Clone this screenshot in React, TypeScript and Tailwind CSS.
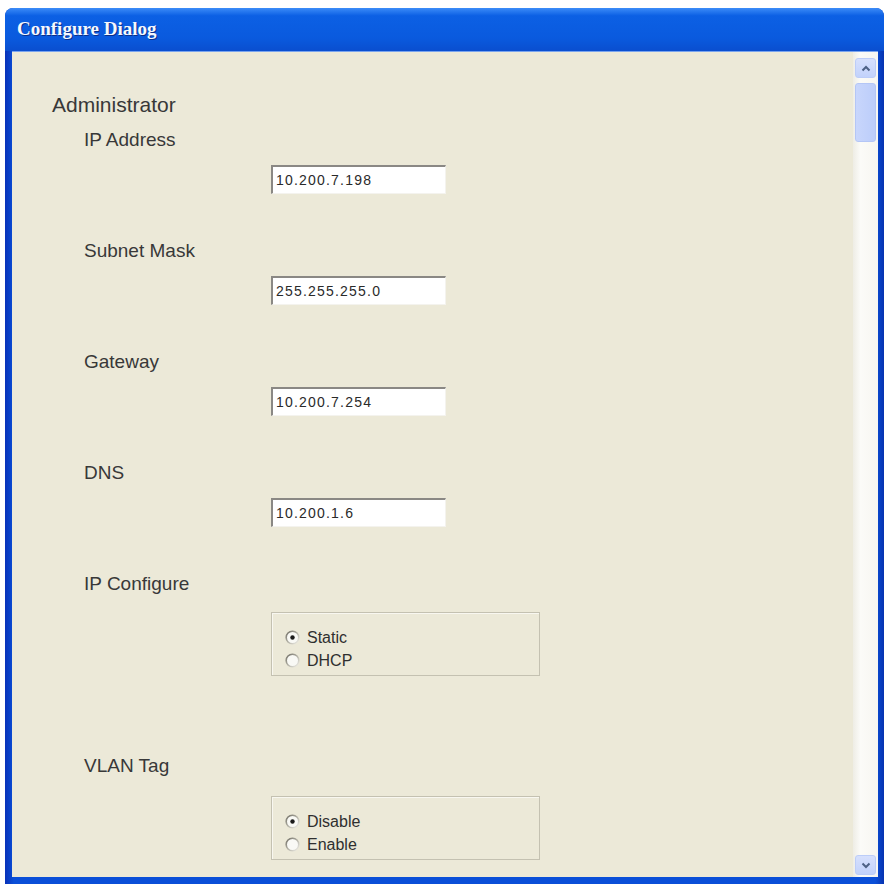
import React from "react";

const fields = [
  { label: "IP Address", value: "10.200.7.198" },
  { label: "Subnet Mask", value: "255.255.255.0" },
  { label: "Gateway", value: "10.200.7.254" },
  { label: "DNS", value: "10.200.1.6" },
];

const Radio = ({ checked, label }: { checked?: boolean; label: string }) => (
  <div className="flex items-center h-[23px]">
    <svg width="15" height="15" viewBox="0 0 15 15" className="shrink-0">
      <defs>
        <linearGradient id="rg" x1="0" y1="0" x2="1" y2="1">
          <stop offset="0" stopColor="#6f6d64" />
          <stop offset="0.55" stopColor="#b9b7ac" />
          <stop offset="1" stopColor="#f2f1ea" />
        </linearGradient>
      </defs>
      <circle cx="7.5" cy="7.5" r="6.3" fill="#f9f9f5" stroke="url(#rg)" strokeWidth="1.6" />
      {checked && <circle cx="7.5" cy="7.5" r="2.2" fill="#1a1a1a" />}
    </svg>
    <span className="ml-[7px] text-[16px] leading-[23px] text-[#2f2f2f]">{label}</span>
  </div>
);

const GroupBox = ({ options }: { options: string[] }) => (
  <div className="ml-[219px] w-[269px] h-[64px] border border-[#c4c1b1] shadow-[inset_1px_1px_0_#f8f7f0] pt-[13px] pl-[13px]">
    {options.map((o, i) => (
      <Radio key={o} label={o} checked={i === 0} />
    ))}
  </div>
);

const Chevron = ({ up }: { up?: boolean }) => (
  <svg width="10" height="7" viewBox="0 0 10 7">
    <path
      d={up ? "M1.5 5.5 L5 2 L8.5 5.5" : "M1.5 1.5 L5 5 L8.5 1.5"}
      fill="none"
      stroke="#4d6185"
      strokeWidth="2"
    />
  </svg>
);

export default function App() {
  return (
    <div className="w-[887px] h-[884px] bg-white pt-[8px] pl-[5px] font-['Liberation_Sans',Arial,sans-serif]">
      <div className="w-[879px] h-[876px] flex flex-col rounded-t-[8px] overflow-hidden bg-[linear-gradient(to_right,#0831b8,#0a4fd8_1%,#0a4fd8_99%,#0733b0)]">
        {/* title bar */}
        <div className="h-[43px] shrink-0 flex items-center pl-[12px] bg-[linear-gradient(to_bottom,#3c8cf8,#0c60e4_18%,#0a5ade_70%,#0a4ecf)]">
          <span className="font-['Liberation_Serif',serif] font-bold text-[19px] text-[#f4f8ff] [text-shadow:1px_1px_0_#0a2f8a]">
            Configure Dialog
          </span>
        </div>

        {/* body */}
        <div className="flex-1 flex ml-[7px] mr-[6px] mb-[7px] border-t border-[#7aa4ee] bg-[#ece9d8]">
          <div className="flex-1 pl-[40px] pt-[41px]">
            <div className="text-[21px] leading-[24px] text-[#383838]">Administrator</div>

            {fields.map((f, i) => (
              <div key={f.label} className={i === 0 ? "mt-[11px]" : "mt-[45px]"}>
                <div className="pl-[32px] text-[19px] leading-[24px] text-[#383838]">{f.label}</div>
                <div className="ml-[219px] mt-[13px] w-[175px] h-[29px] bg-white border-t-2 border-l-2 border-t-[#8a8884] border-l-[#8a8884] border-b border-r border-b-[#f4f3ee] border-r-[#f4f3ee] flex items-center pl-[3px]">
                  <span className="text-[14px] tracking-[1.2px] text-[#2a2a2a]">{f.value}</span>
                </div>
              </div>
            ))}

            <div className="mt-[45px] pl-[32px] text-[19px] leading-[24px] text-[#383838]">IP Configure</div>
            <div className="mt-[16px]">
              <GroupBox options={["Static", "DHCP"]} />
            </div>

            <div className="mt-[78px] pl-[32px] text-[19px] leading-[24px] text-[#383838]">VLAN Tag</div>
            <div className="mt-[18px]">
              <GroupBox options={["Disable", "Enable"]} />
            </div>
          </div>

          {/* scrollbar */}
          <div className="w-[25px] bg-[linear-gradient(to_right,#eeede5,#fbfbf8_30%,#f7f6f1)] flex flex-col items-center pt-[6px] pb-[2px]">
            <div className="w-[21px] h-[20px] rounded-[3px] bg-[linear-gradient(to_bottom,#d6e0fd,#c2d2fb)] border border-[#bccdf8] flex items-center justify-center">
              <Chevron up />
            </div>
            <div className="mt-[5px] w-[21px] h-[59px] rounded-[3px] bg-[linear-gradient(to_right,#c8d6fc,#bccdfa)] border border-[#b4c6f6]" />
            <div className="flex-1" />
            <div className="w-[21px] h-[20px] rounded-[3px] bg-[linear-gradient(to_bottom,#d6e0fd,#c2d2fb)] border border-[#bccdf8] flex items-center justify-center">
              <Chevron />
            </div>
          </div>
        </div>
      </div>
    </div>
  );
}
